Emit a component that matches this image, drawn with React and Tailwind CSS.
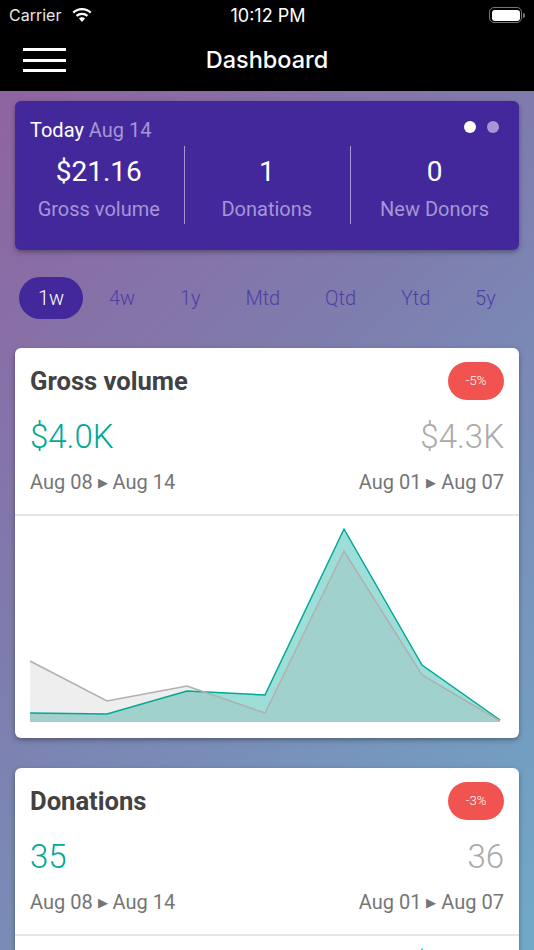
const tabs = ["4w", "1y", "Mtd", "Qtd", "Ytd", "5y"];

const todayStats = [
  { value: "$21.16", label: "Gross volume" },
  { value: "1", label: "Donations" },
  { value: "0", label: "New Donors" },
];

function StatusBar() {
  return (
    <div className="flex h-[30px] items-center justify-between pl-[9px] pr-[9px] font-['Inter',sans-serif] text-white">
      <div className="flex w-[150px] items-center gap-[11px] text-[16px] text-[#e8e8e8]">
        <span>Carrier</span>
        <svg width="20" height="15" viewBox="0 0 20 15" fill="#fff">
          <path d="M10 2.2c3.1 0 5.9 1.2 8 3.2l1.5-1.6A13.8 13.8 0 0 0 10 0 13.8 13.8 0 0 0 .5 3.8L2 5.4a11.6 11.6 0 0 1 8-3.2z" />
          <path d="M10 6.9c1.8 0 3.4.7 4.7 1.8l1.5-1.6A9.2 9.2 0 0 0 10 4.7a9.2 9.2 0 0 0-6.2 2.4l1.5 1.6A7 7 0 0 1 10 6.9z" />
          <path d="M10 9.3c-1.2 0-2.2.4-3 1.2l3 3.4 3-3.4c-.8-.8-1.8-1.2-3-1.2z" />
        </svg>
      </div>
      <span className="pl-[2px] text-[18px] font-normal">10:12 PM</span>
      <div className="flex w-[150px] items-center justify-end">
        <div className="flex h-[16px] w-[33px] items-center rounded-[5px] border border-[#777] p-[1.5px]">
          <div className="h-full w-full rounded-[3px] bg-white" />
        </div>
        <div className="ml-[1px] h-[5px] w-[1.5px] rounded-r-sm bg-[#777]" />
      </div>
    </div>
  );
}

function NavBar() {
  return (
    <div className="relative flex h-[61px] items-center justify-center pb-[2px]">
      <div className="absolute left-[23px] top-[18px] flex h-[24px] w-[43px] flex-col justify-between">
        <div className="h-[3px] bg-white" />
        <div className="h-[3px] bg-white" />
        <div className="h-[3px] bg-white" />
      </div>
      <h1 className="font-['Inter',sans-serif] text-[23.5px] font-medium text-white">Dashboard</h1>
    </div>
  );
}

function TodayCard() {
  return (
    <div className="mx-[15px] mt-[10px] h-[149px] rounded-[6px] bg-[#43289c] shadow-[0_2px_5px_rgba(0,0,0,0.35)]">
      <div className="flex items-center justify-between pl-[15px] pr-[20px] pt-[16px]">
        <div className="text-[20px] leading-[26px] text-white">
          Today <span className="text-[#a596d6]">Aug 14</span>
        </div>
        <div className="mb-[7px] flex gap-[11px]">
          <div className="h-[12px] w-[12px] rounded-full bg-white" />
          <div className="h-[12px] w-[12px] rounded-full bg-[#a596d6]" />
        </div>
      </div>
      <div className="mt-[3px] flex">
        {todayStats.map((s, i) => (
          <div
            key={s.label}
            className={`flex h-[78px] flex-col items-center pr-[1px] ${i < 2 ? "border-r border-[#a596d6]" : ""} ${i === 0 ? "w-[169.5px]" : i === 1 ? "w-[166.5px]" : "flex-1"}`}
          >
            <div className="mt-[6px] text-[28px] leading-[40px] text-white">{s.value}</div>
            <div className="mt-[4px] text-[20px] leading-[26px] text-[#a596d6]">{s.label}</div>
          </div>
        ))}
      </div>
    </div>
  );
}

function PeriodTabs() {
  return (
    <div className="ml-[19px] mt-[27px] flex items-center gap-[6.8px] text-[20px] font-light">
      <div className="flex h-[42px] items-center rounded-full bg-[#43289c] px-[19px] text-white">1w</div>
      {tabs.map((t) => (
        <div key={t} className="flex h-[42px] items-center px-[19px] text-[#4f3ea5]">
          {t}
        </div>
      ))}
    </div>
  );
}

function DateRange({ from, to }) {
  return (
    <span>
      {from} <span className="align-[2px] text-[13px]">▶</span> {to}
    </span>
  );
}

function MetricCard({ title, badge, current, previous, children }) {
  return (
    <div className="mx-[15px] rounded-[6px] bg-white shadow-[0_2px_5px_rgba(0,0,0,0.35)]">
      <div className="h-[168px] border-b-2 border-[#e6e6e8] px-[15px] pt-[14px]">
        <div className="flex items-start justify-between">
          <h2 className="mt-[1px] text-[25.6px] font-bold leading-[36px] text-[#424242]">{title}</h2>
          <div className="flex h-[38px] w-[56px] items-center justify-center rounded-full bg-[#f05350] text-[13px] font-light text-white">
            {badge}
          </div>
        </div>
        <div className="mt-[13px] flex items-center justify-between text-[33px] font-light leading-[48px]">
          <span className="text-[#00a896]">{current}</span>
          <span className="text-[#aaaaaa]">{previous}</span>
        </div>
        <div className="mt-[7px] flex items-center justify-between text-[20px] leading-[28px] text-[#757575]">
          <DateRange from="Aug 08" to="Aug 14" />
          <DateRange from="Aug 01" to="Aug 07" />
        </div>
      </div>
      {children}
    </div>
  );
}

function GrossChart() {
  const teal = "15,197 92,198 172,175 250,179 329,13 407,149 485,204";
  const gray = "15,145 92,185 172,170 250,197 329,35 407,159 485,205";
  return (
    <svg width="504" height="222" viewBox="0 0 504 222" className="block">
      <defs>
        <clipPath id="gross-teal">
          <polygon points={`${teal} 485,206 15,206`} />
        </clipPath>
      </defs>
      <polygon points={`${gray} 485,206 15,206`} fill="#eeeeee" />
      <polygon points={`${teal} 485,206 15,206`} fill="#9ddfd8" />
      <polygon points={`${gray} 485,206 15,206`} fill="#a0d1cd" clipPath="url(#gross-teal)" />
      <polyline points={teal} fill="none" stroke="#00a896" strokeWidth="1.5" />
      <polyline points={gray} fill="none" stroke="#b0b0b0" strokeWidth="1.5" />
    </svg>
  );
}

function DonationsChart() {
  return (
    <svg width="504" height="30" viewBox="0 0 504 30" className="block">
      <polyline points="15,14.5 18,40 396,40 407,13.5 418,40 485,40" fill="none" stroke="#00a896" strokeWidth="1.3" />
    </svg>
  );
}

export default function App() {
  return (
    <div className="h-[950px] w-[534px] overflow-hidden bg-[linear-gradient(135deg,#92609e_0%,#7e7dae_45%,#70a9c8_100%)] font-['Roboto',sans-serif]">
      <div className="bg-black">
        <StatusBar />
        <NavBar />
      </div>
      <TodayCard />
      <PeriodTabs />
      <div className="mt-[29px] flex flex-col gap-[30px]">
        <MetricCard title="Gross volume" badge="-5%" current="$4.0K" previous="$4.3K">
          <GrossChart />
        </MetricCard>
        <MetricCard title="Donations" badge="-3%" current="35" previous="36">
          <DonationsChart />
        </MetricCard>
      </div>
    </div>
  );
}
